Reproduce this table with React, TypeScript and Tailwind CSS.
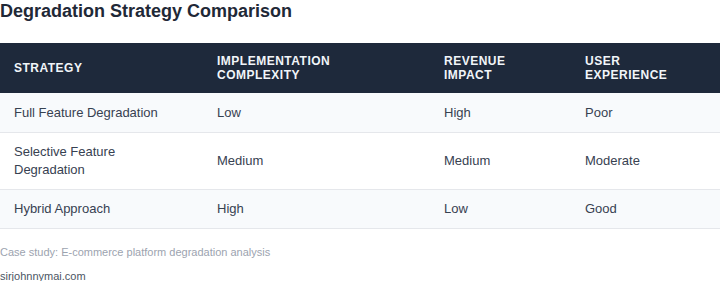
export default function App() {
  const rows = [
    ["Full Feature Degradation", "Low", "High", "Poor"],
    ["Selective Feature Degradation", "Medium", "Medium", "Moderate"],
    ["Hybrid Approach", "High", "Low", "Good"],
  ];
  const headers = ["Strategy", "Implementation Complexity", "Revenue Impact", "User Experience"];
  return (
    <div className="w-[720px] bg-white" style={{ fontFamily: '"Liberation Sans", Arial, sans-serif' }}>
      <h1 className="text-[18px] font-bold leading-[22px] text-[#1f2937] m-0">Degradation Strategy Comparison</h1>
      <table className="w-full table-fixed border-collapse mt-[21px]">
        <colgroup>
          <col className="w-[203px]" />
          <col className="w-[227px]" />
          <col className="w-[141px]" />
          <col className="w-[149px]" />
        </colgroup>
        <thead>
          <tr className="bg-[#1e293b]">
            {headers.map((h) => (
              <th key={h} className="h-[50px] px-[14px] py-[11px] text-left align-middle text-[12px] leading-[14px] font-bold uppercase tracking-[0.5px] text-[#f1f5f9]">
                {h}
              </th>
            ))}
          </tr>
        </thead>
        <tbody>
          {rows.map((r, i) => (
            <tr key={i} className={`border-b border-[#e5e7eb] ${i % 2 === 0 ? "bg-[#f8fafc]" : "bg-white"}`}>
              {r.map((c, j) => (
                <td key={j} className="px-[14px] py-[10.5px] align-middle text-[13px] leading-[17.5px] text-[#374151]">
                  {c}
                </td>
              ))}
            </tr>
          ))}
        </tbody>
      </table>
      <p className="mt-[17px] text-[11px] leading-[13px] text-[#9ca3af]">Case study: E-commerce platform degradation analysis</p>
      <p className="mt-[11px] text-[11px] leading-[13px] text-[#4b5563]">sirjohnnymai.com</p>
    </div>
  );
}
